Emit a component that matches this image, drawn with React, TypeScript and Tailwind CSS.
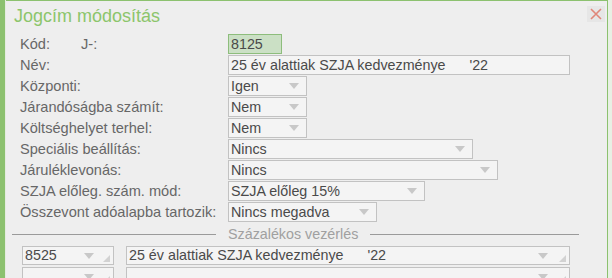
import React from "react";

const font = { fontFamily: '"Liberation Sans", Arial, sans-serif' };

function Arrow() {
  return (
    <svg width="10" height="6" viewBox="0 0 10 6" className="shrink-0">
      <path d="M0 0 L10 0 L5 6 Z" fill="#c8c8c8" />
    </svg>
  );
}

function Corner() {
  return (
    <svg width="7" height="7" viewBox="0 0 7 7" className="shrink-0 self-end mb-[2px]">
      <path d="M7 0 L7 7 L0 7 Z" fill="#d2d2d2" />
    </svg>
  );
}

function Select({ value, width }: { value: string; width: string }) {
  return (
    <div
      className={`${width} h-[20px] border border-[#c2c2c2] bg-[#f4f4f4] flex items-center pl-[2px] pr-[7px] text-[14.3px] text-[#4a4a4a]`}
    >
      <span className="flex-1 whitespace-pre leading-none">{value}</span>
      <Arrow />
    </div>
  );
}

function Row({ label, children }: { label: React.ReactNode; children: React.ReactNode }) {
  return (
    <div className="flex items-center h-[20px] mb-[1px] shrink-0">
      <div className="w-[208px] text-[14.6px] text-[#676767] leading-none">{label}</div>
      {children}
    </div>
  );
}

export default function App() {
  return (
    <div className="w-[612px] h-[278px] flex bg-[#e8f0e4] overflow-hidden" style={font}>
      <div className="w-[5px] bg-[#8cc16f]" />
      <div className="w-[1px] bg-[#e4ece0]" />
      <div className="w-[602px] h-full bg-[#eeeeee] border-t border-r border-[#8cc16f] flex flex-col overflow-hidden">
        <div className="flex items-start justify-between h-[33px] shrink-0">
          <div className="pl-[8px] pt-[4px] text-[18px] text-[#8cc56b] leading-[22px]">Jogcím módosítás</div>
          <div className="mt-[5px] mr-[2px] w-[18px] h-[16px] bg-[#e6e6e6] flex items-center justify-center">
            <svg width="12" height="12" viewBox="0 0 12 12">
              <path d="M1 1 L11 11 M11 1 L1 11" stroke="#e0877a" strokeWidth="1.6" />
            </svg>
          </div>
        </div>

        <div className="pl-[14px] flex flex-col shrink-0">
          <Row
            label={
              <span className="flex">
                <span className="w-[61px]">Kód:</span>
                <span>J-:</span>
              </span>
            }
          >
            <div className="w-[54px] h-[20px] border border-[#8dbd7c] bg-[#cbe0c5] flex items-center pl-[2px] text-[14.3px] text-[#4a4a4a] leading-none">
              8125
            </div>
          </Row>
          <Row label="Név:">
            <div className="w-[342px] h-[20px] border border-[#c2c2c2] bg-[#f4f4f4] flex items-center pl-[2px] text-[14.3px] text-[#4a4a4a] leading-none whitespace-pre">
              {"25 év alattiak SZJA kedvezménye      '22"}
            </div>
          </Row>
          <Row label="Központi:">
            <Select value="Igen" width="w-[79px]" />
          </Row>
          <Row label="Járandóságba számít:">
            <Select value="Nem" width="w-[79px]" />
          </Row>
          <Row label="Költséghelyet terhel:">
            <Select value="Nem" width="w-[79px]" />
          </Row>
          <Row label="Speciális beállítás:">
            <Select value="Nincs" width="w-[245px]" />
          </Row>
          <Row label="Járuléklevonás:">
            <Select value="Nincs" width="w-[270px]" />
          </Row>
          <Row label="SZJA előleg. szám. mód:">
            <Select value="SZJA előleg 15%" width="w-[197px]" />
          </Row>
          <Row label="Összevont adóalapba tartozik:">
            <Select value="Nincs megadva" width="w-[149px]" />
          </Row>
        </div>

        <div className="flex items-center mt-[2px] pl-[6px] pr-[28px] h-[18px] shrink-0">
          <div className="w-[204px] h-[1px] bg-[#9a9a9a]" />
          <div className="px-[12px] text-[14.3px] text-[#a0a0a0] leading-none">Százalékos vezérlés</div>
          <div className="flex-1 h-[1px] bg-[#9a9a9a]" />
        </div>

        <div className="pl-[16px] mt-[3px] flex flex-col gap-[2px] shrink-0">
          {[
            ["8525", "25 év alattiak SZJA kedvezménye      '22"],
            ["", ""],
          ].map(([code, name], i) => (
            <div key={i} className="flex gap-[12px]">
              <div className="w-[92px] h-[19px] border border-[#c2c2c2] bg-[#f4f4f4] flex items-center pl-[2px] pr-[3px] text-[14.3px] text-[#4a4a4a] leading-none">
                <span className="flex-1">{code}</span>
                <Arrow />
                <span className="w-[9px]" />
                <Corner />
              </div>
              <div className="w-[444px] h-[19px] border border-[#c2c2c2] bg-[#f4f4f4] flex items-center pl-[2px] pr-[3px] text-[14.3px] text-[#4a4a4a] leading-none">
                <span className="flex-1 whitespace-pre">{name}</span>
                <Arrow />
                <span className="w-[11px]" />
                <Corner />
              </div>
            </div>
          ))}
        </div>
      </div>
      <div className="flex-1" />
    </div>
  );
}
